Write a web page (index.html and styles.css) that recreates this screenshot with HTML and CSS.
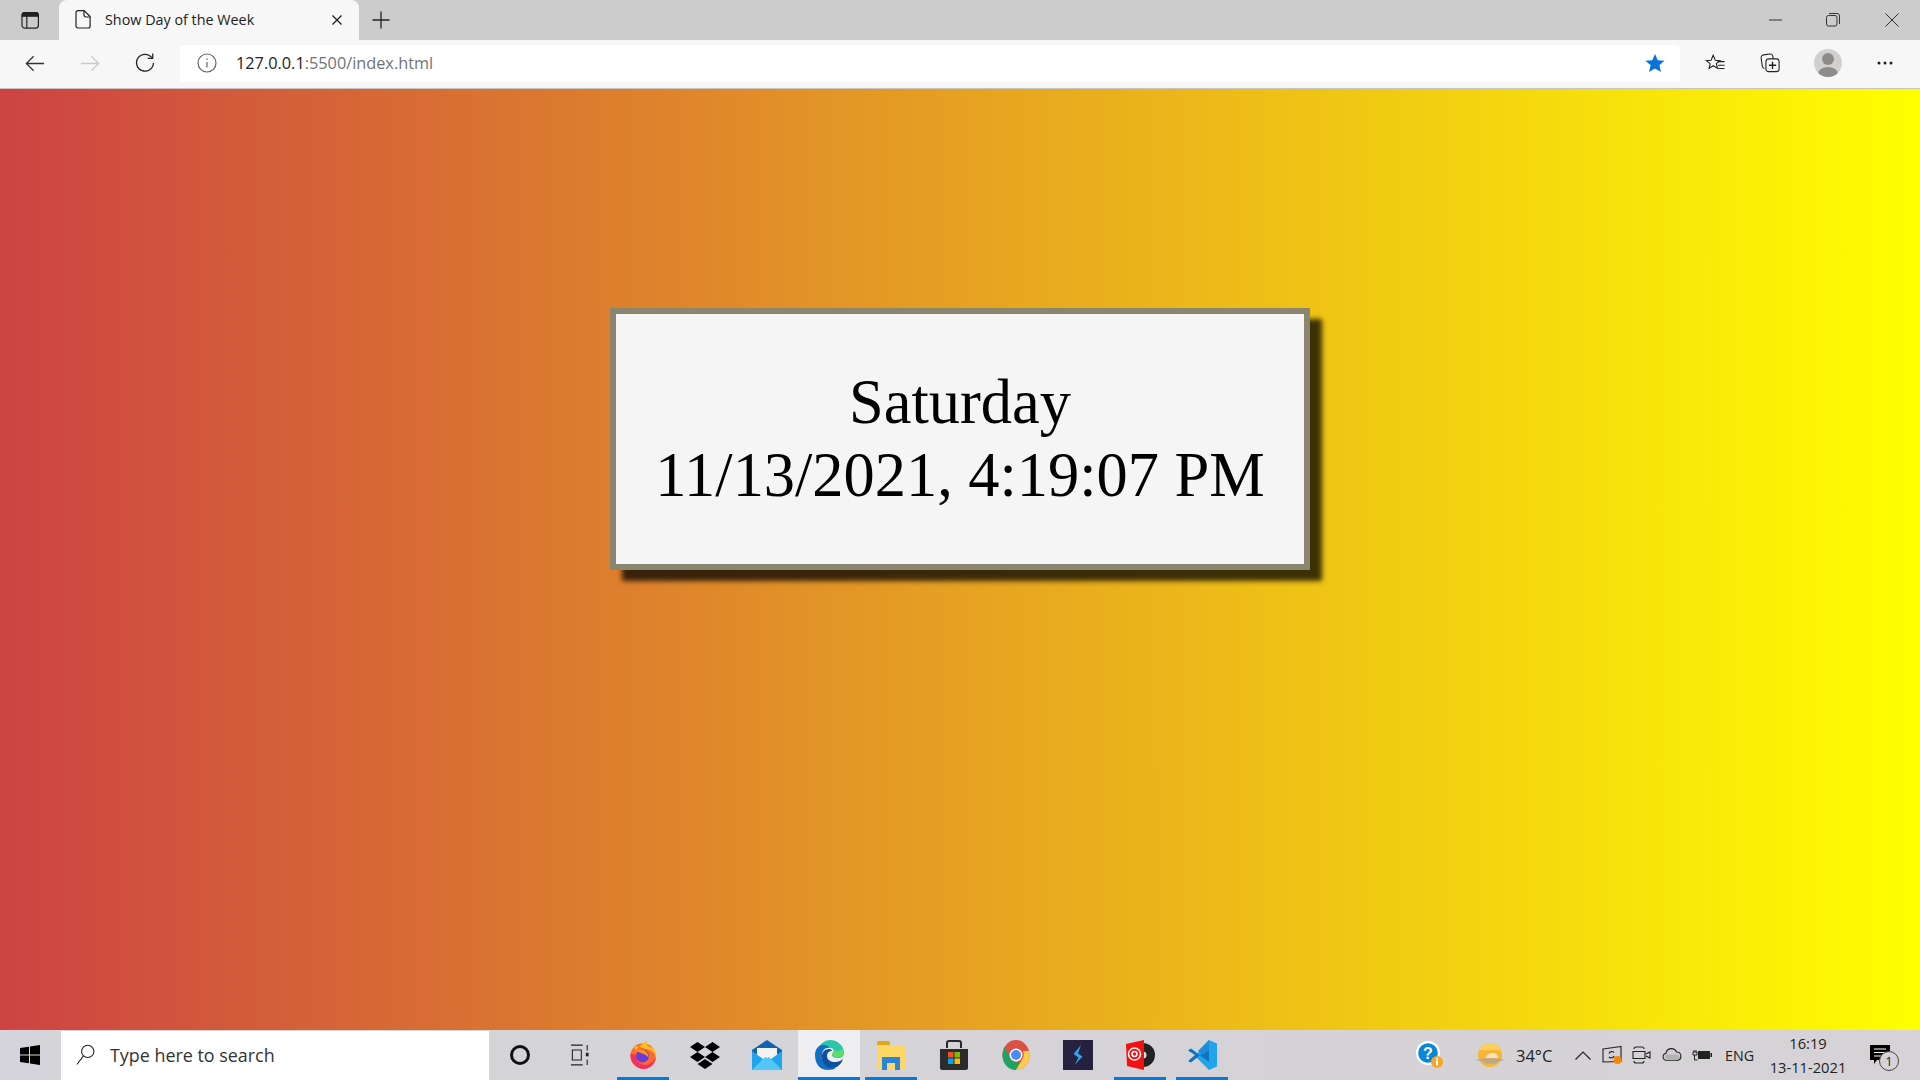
FILE: index.html
```html
<!DOCTYPE html>
<html lang="en">
<head>
<meta charset="utf-8">
<title>Show Day of the Week</title>
<link rel="stylesheet" href="styles.css">
</head>
<body>
<div class="screen">
  <header class="tabstrip">
    <div class="tab-actions">
      <svg class="ic18" viewBox="0 0 18 18" fill="none" stroke="#222" stroke-width="1.2"><rect x="1" y="1.6" width="16.4" height="15.6" rx="3"/><path d="M1.2 3.2a2 2 0 0 1 2-1.6h12a2 2 0 0 1 2 1.6v2H1.2z" fill="#222"/><path d="M5.8 5v12"/></svg>
    </div>
    <div class="tab">
      <svg class="tab-doc" viewBox="0 0 16 19" fill="none" stroke="#222" stroke-width="1.2"><path d="M3 .7h6.2l5.9 5.9V16a2 2 0 0 1-2 2H3a2 2 0 0 1-2-2V2.700a2 2 0 0 1 2-2z"/><path d="M9 1v4a2 2 0 0 0 2 2h4"/></svg>
      <span class="tab-title">Show Day of the Week</span>
      <svg class="tab-close" viewBox="0 0 12 12" fill="none" stroke="#222" stroke-width="1.4"><path d="M1.500 1.500l9 9M10.500 1.500l-9 9"/></svg>
    </div>
    <svg class="new-tab" viewBox="0 0 18 18" fill="none" stroke="#222" stroke-width="1.300"><path d="M9 .5v17M.5 9h17"/></svg>
    <div class="window-controls">
      <svg class="win-min" viewBox="0 0 14 2" fill="none" stroke="#333" stroke-width="1"><path d="M0 1h13"/></svg>
      <svg class="win-max" viewBox="0 0 14 14" fill="none" stroke="#333" stroke-width="1"><rect x=".5" y="2.500" width="10.500" height="10.500" rx="2"/><path d="M3 .5h8a2.500 2.500 0 0 1 2.500 2.500v8"/></svg>
      <svg class="win-close" viewBox="0 0 14 14" fill="none" stroke="#333" stroke-width="1"><path d="M.5.500l13 13M13.500.500l-13 13"/></svg>
    </div>
  </header>

  <nav class="toolbar">
    <svg class="nav-back" viewBox="0 0 22 18" fill="none" stroke="#333" stroke-width="1.400"><path d="M21 9H1.500M9.500 1l-8 8 8 8"/></svg>
    <svg class="nav-forward" viewBox="0 0 22 18" fill="none" stroke="#c9c9c9" stroke-width="1.400"><path d="M1 9h19.500M12.500 1l8 8-8 8"/></svg>
    <svg class="nav-reload" viewBox="0 0 22 22" fill="none" stroke="#222" stroke-width="1.400"><path d="M18.500 5.200A9.300 9.300 0 1 0 20.300 11"/><path d="M19.500 .5v5.500H14"/></svg>
    <div class="address">
      <svg class="addr-info" viewBox="0 0 20 20" fill="none" stroke="#666" stroke-width="1.200"><circle cx="10" cy="10" r="9"/><path d="M10 9v5.500M10 5.500v1.500"/></svg>
      <span class="url"><span class="url-host">127.0.0.1</span>:5500/index.html</span>
      <svg class="addr-star" viewBox="0 0 22 21"><path d="M11 .5l3 7 7.500.600-5.700 4.900 1.800 7.400L11 16.500l-6.600 3.900 1.800-7.400L.5 8.100 8 7.500z" fill="#0a73d9"/></svg>
    </div>
    <svg class="tool tool-first" viewBox="0 0 22 20" fill="none" stroke="#222" stroke-width="1.200"><path d="M9 1.500l2.300 5.500 5.200.4-4 3.300 1.200 5-4.700-2.700-4.500 2.900L5.700 10.700 1.500 7.400l5.200-.4z"/><path d="M14 8.500h7.500M14.500 12.500h7M14.500 16h7"/></svg>
    <svg class="tool" viewBox="0 0 22 21" fill="none" stroke="#222" stroke-width="1.200"><path d="M5 16.500A3 3 0 0 1 2.500 14L1.200 5A3 3 0 0 1 3.800 1.600l7-1a3 3 0 0 1 3.200 2l.5 3"/><rect x="6.500" y="6" width="14.500" height="14" rx="3"/><path d="M13.800 9v8M9.800 13h8" stroke-width="1.500"/></svg>
    <div class="avatar"><span class="avatar-head"></span><span class="avatar-body"></span></div>
    <svg class="tool-more" viewBox="0 0 16 4" fill="#222"><circle cx="2" cy="2" r="1.500"/><circle cx="8" cy="2" r="1.500"/><circle cx="14" cy="2" r="1.500"/></svg>
  </nav>

  <main class="page">
    <section class="card">
      <div>Saturday</div>
      <div>11/13/2021, 4:19:07 PM</div>
    </section>
  </main>

  <footer class="taskbar">
    <div class="start">
      <svg class="ic-win" viewBox="0 0 20 20" fill="#000"><path d="M0 3l9-1.300v7.800H0zM10 1.500L20 0v9.500H10zM0 10.500h9v7.800L0 17zM10 10.500h10V20L10 18.500z"/></svg>
    </div>
    <div class="search">
      <svg class="search-ic" viewBox="0 0 21 24" fill="none" stroke="#222" stroke-width="1.200"><circle cx="13" cy="8" r="6.800"/><path d="M8.300 13L1 22.500"/></svg>
      <span class="search-text">Type here to search</span>
    </div>
    <div class="slot slot-cortana"><span class="cortana"></span></div>
    <div class="slot slot-tv">
      <svg class="ic-tv" viewBox="0 0 20 24" fill="none" stroke="#222" stroke-width="1.200"><path d="M0 1h13M0 23h13M1.500 6.500h10v11h-10zM18 1v6M18 17v6"/><rect x="16.500" y="9.500" width="3" height="4" fill="#222" stroke="none"/></svg>
    </div>
    <div class="apps">
      <div class="app active-line">
        <svg class="ic28" viewBox="0 0 30 30"><circle cx="15" cy="16" r="13.500" fill="#ff6a2a"/><path d="M6 5c0 3 0 4 2 5C11 4 17 1 20 0c-2 3-1 5 2 6 5 2 8 7 7 12-1-6-5-8-9-9z" fill="#ffbd1f"/><path d="M1.500 14c0 9 6 16 14 16s13-6 13.500-13c-3 7-9 10-15 8-5-2-7-6-6-10z" fill="#f0325e"/><circle cx="14.500" cy="16" r="7" fill="#6b3bd4"/><path d="M8 11c5-4 13-1 13 7-3-4-8-5-13-7z" fill="#ff9122"/></svg>
      </div>
      <div class="app">
        <svg class="ic30" viewBox="0 0 30 30" fill="#000"><path d="M7.500 2L15 7 7.500 12 0 7zM22.500 2L30 7 22.500 12 15 7zM7.500 12L15 17 7.500 22 0 17zM22.500 12L30 17 22.500 22 15 17zM15 19l7.500 5L15 29l-7.500-5z"/></svg>
      </div>
      <div class="app">
        <svg class="ic30" viewBox="0 0 30 30"><path d="M0 10L15 0l15 10v4H0z" fill="#0f63b0"/><path d="M5 15V8h20v7l-10 7z" fill="#f2f2f2"/><path d="M0 11l15 11 15-11v19H0z" fill="#20a4ee"/><path d="M0 30l13-13 2 1 2-1 13 13z" fill="#52c7f7"/></svg>
      </div>
      <div class="app app-open">
        <svg class="ic30" viewBox="0 0 30 30"><path d="M3 10C6 3 12 0 16 0c8 0 14 6 14 13 0 3-2 5-6 5-3 0-6-1-6-3 0-3 3-3 1-6-2-2-8-2-11 0-2 1-3 2-5 1z" fill="#2cc6a8"/><path d="M29 9c1 3 1 6-2 8-3 1-7 0-9-2 0-2 2-3 2-5 3 2 6 1 9-1z" fill="#5fdc6c"/><path d="M1 15C1 8 6 4 11 5c4 1 5 3 5 3-5-1-8 3-8 7 0 7 6 13 14 13-2 1-4 2-8 2C6 30 1 24 1 15z" fill="#1170c4"/><path d="M8 16c0-4 3-7 7-7 2 0 3 1 3 2-3 0-5 2-5 5 0 4 4 6 8 6 3 0 6-1 8-3-2 6-7 10-13 9C11 27 8 22 8 16z" fill="#0f4f9e"/></svg>
      </div>
      <div class="app active-line">
        <svg class="ic28" viewBox="0 0 28 30"><path d="M0 3a2 2 0 0 1 2-2h9a2 2 0 0 1 2 2v2H0z" fill="#e3a41a"/><rect y="5" width="28" height="25" rx="1" fill="#fbd768"/><path d="M5 30V17h18v13h-5v-7h-8v7z" fill="#2b84d6"/></svg>
      </div>
      <div class="app">
        <svg class="ic30" viewBox="0 0 30 30"><path d="M8 8V3a2 2 0 0 1 2-2h10a2 2 0 0 1 2 2v5" fill="none" stroke="#2a2a2a" stroke-width="2"/><path d="M1 9h28v19a2 2 0 0 1-2 2H3a2 2 0 0 1-2-2z" fill="#2c2c2c"/><rect x="9" y="12" width="5.500" height="5.500" fill="#f25022"/><rect x="15.500" y="12" width="5.500" height="5.500" fill="#7fba00"/><rect x="9" y="18.500" width="5.500" height="5.500" fill="#00a4ef"/><rect x="15.500" y="18.500" width="5.500" height="5.500" fill="#ffb900"/></svg>
      </div>
      <div class="app">
        <svg class="ic28" viewBox="0 0 28 30"><ellipse cx="14" cy="15" rx="13.500" ry="15" fill="#dd5044"/><path d="M14 30C6 30 .5 23 .5 15c0-3 1-6 2-8l7 13c1 2 6 4 9 1z" fill="#1da462"/><path d="M14 30l7-12c1-2 1-4 0-7h6c1 1 .5 4 .5 4 0 8-6 15-13.500 15z" fill="#ffcd46"/><circle cx="14" cy="15" r="6.500" fill="#fff"/><circle cx="14" cy="15" r="5" fill="#4c8bf5"/></svg>
      </div>
      <div class="app">
        <svg class="ic30" viewBox="0 0 30 30"><rect width="30" height="30" fill="#25213f"/><path d="M18 5l-7.500 9 5 3.500-4 7.500 8-8.500-4.500-3z" fill="#38a3e8"/></svg>
      </div>
      <div class="app active-line">
        <svg class="ic30" viewBox="0 0 30 30"><circle cx="18" cy="15" r="12" fill="#222"/><circle cx="18" cy="15" r="3.500" fill="#ddd"/><path d="M1 4l18-4v30L2 26z" fill="#f41010"/><circle cx="9.500" cy="14" r="6" fill="none" stroke="#fff" stroke-width="1.500"/><circle cx="9.500" cy="14" r="2.500" fill="none" stroke="#fff" stroke-width="1.500"/></svg>
      </div>
      <div class="app active-line">
        <svg class="ic30" viewBox="0 0 30 30"><path d="M22 0l8 3.500v23L22 30 8 16z" fill="#22a3ea"/><path d="M22 8v14L4 8.500 1 10.500 8 15l-7 6 3 1.500z" fill="#0d74bd"/><path d="M22 0l-11 11 5 4 6-5z" fill="#1a8ed9"/></svg>
      </div>
    </div>
    <div class="tray">
      <div class="tray-item tray-help">
        <svg class="ic28" viewBox="0 0 28 28"><circle cx="12" cy="12" r="12" fill="#fff"/><circle cx="12" cy="12" r="9.800" fill="#0a86d8"/><text x="12" y="18" class="help-q">?</text><circle cx="21" cy="21" r="6" fill="#f6a623"/><rect x="20" y="19.500" width="2" height="5" fill="#fff"/><rect x="20" y="16.800" width="2" height="1.800" fill="#fff"/></svg>
      </div>
      <div class="tray-item tray-sun">
        <svg class="ic-sun" viewBox="0 0 30 24"><circle cx="15" cy="12" r="12" fill="#f7b638"/><path d="M15 0a12 12 0 0 1 11 7H4A12 12 0 0 1 15 0z" fill="#fbd05c"/><path d="M11 15c0-3 3-5 7-5 3 0 5 2 5 5z" fill="#f3e2bd"/><path d="M0 17l9-1.500h14l7 1.500-7 1.500-3 2H11l-3-2z" fill="#b7a78f"/></svg>
      </div>
      <span class="temp">34°C</span>
      <svg class="tray-chev" viewBox="0 0 16 9" fill="none" stroke="#222" stroke-width="1.200"><path d="M.5 8.500L8 1l7.500 7.500"/></svg>
      <svg class="tray-ic tray-ic-first" viewBox="0 0 20 18" fill="none" stroke="#222" stroke-width="1.100"><path d="M1 3l18-2.500v15L1 16z"/><path d="M7 7.500a3 3 0 0 1 5-1M12 10a3 3 0 0 1-5 1" /><circle cx="15.500" cy="14" r="4" fill="#f7860c" stroke="none"/></svg>
      <svg class="tray-ic" viewBox="0 0 20 18" fill="none" stroke="#222" stroke-width="1.100"><path d="M2 3a2 2 0 0 1 2-2h6a2 2 0 0 1 2 2M2 15a2 2 0 0 0 2 2h6a2 2 0 0 0 2-2M1 5.500h12v7H1zM14 8l4-2v6l-4-2"/></svg>
      <svg class="tray-ic" viewBox="0 0 20 14" fill="#d2d0d2" stroke="#222" stroke-width="1.100"><path d="M4.500 12.500a3.700 3.700 0 0 1-.5-7.300A5.500 5.500 0 0 1 14.500 4 4.300 4.300 0 0 1 15.500 12.500z"/><path d="M3 6.500h13l2 3-3 3H4z" fill="#a7a5a7" stroke="none" opacity=".7"/></svg>
      <svg class="tray-ic" viewBox="0 0 20 12" fill="#222"><path d="M2 1v2M4 1v2M1 3h4v3H1zM2.500 6v5h3" fill="none" stroke="#222"/><rect x="6" y="2" width="12" height="8"/><rect x="18.500" y="4" width="1.500" height="4"/></svg>
      <span class="lang">ENG</span>
      <div class="clock"><span>16:19</span><span>13-11-2021</span></div>
      <div class="notify">
        <svg class="notify-ic" viewBox="0 0 20 20"><path d="M0 0h20v15H7l-3 4v-4H0z" fill="#000"/><path d="M4 4h12M4 7.500h12M4 11h12" stroke="#fff" stroke-width="1"/></svg>
        <span class="notify-badge">1</span>
      </div>
    </div>
  </footer>
</div>
</body>
</html>
```
FILE: styles.css
```css
* { box-sizing: border-box; }
html, body { margin: 0; height: 100%; }
body { font-family: "Open Sans", "Liberation Sans", sans-serif; overflow: hidden; }
svg { display: block; flex: none; }

.screen { width: 1920px; height: 1080px; display: flex; flex-direction: column; }

/* tab strip */
.tabstrip { height: 40px; flex: none; background: #cccccc; display: flex; align-items: stretch; }
.tab-actions { width: 59px; display: flex; align-items: center; justify-content: center; }
.ic18 { width: 18px; height: 18px; }
.tab { width: 300px; background: #f7f7f7; border-radius: 8px 8px 0 0; display: flex; align-items: center; padding: 0 16px 2px 16px; }
.tab-doc { width: 16px; height: 19px; margin-right: 14px; }
.tab-title { flex: 1; font-size: 14.350px; color: #222; white-space: nowrap; }
.tab-close { width: 12px; height: 12px; margin-top: 2px; }
.new-tab { width: 18px; height: 18px; align-self: center; margin-left: 13px; }
.window-controls { margin-left: auto; display: flex; align-items: center; }
.win-min { width: 14px; height: 2px; margin-right: 43px; }
.win-max { width: 14px; height: 14px; margin-right: 45px; }
.win-close { width: 14px; height: 14px; margin-right: 21px; }

/* toolbar */
.toolbar { height: 49px; flex: none; background: #f7f7f7; border-bottom: 1px solid #c6c6c6; display: flex; align-items: center; padding: 0 0 2px 25px; }
.nav-back { width: 20px; height: 17px; }
.nav-forward { width: 20px; height: 17px; margin-left: 35px; }
.nav-reload { width: 20px; height: 20px; margin-left: 35px; }
.address { width: 1500px; height: 37px; margin-left: 25px; background: #fff; border-radius: 4px; display: flex; align-items: center; padding: 0 15px 0 17px; }
.addr-info { width: 20px; height: 20px; }
.url { margin-left: 19px; flex: 1; font-size: 16.300px; color: #6f7378; white-space: nowrap; }
.url-host { color: #222; }
.addr-star { width: 20px; height: 20px; }
.tool { width: 20px; height: 20px; }
.tool-first { margin-left: 25px; margin-right: 35px; }
.avatar { width: 28px; height: 28px; margin-left: 34px; border-radius: 50%; background: #d2d0ce; position: relative; overflow: hidden; }
.avatar-head { position: absolute; left: 8px; top: 4px; width: 12px; height: 12px; border-radius: 50%; background: #8e8c8a; }
.avatar-body { position: absolute; left: 4px; top: 18px; width: 20px; height: 14px; border-radius: 50%; background: #8e8c8a; }
.tool-more { width: 16px; height: 4px; margin-left: 35px; }

/* page */
.page { flex: 1; min-height: 0; background: linear-gradient(to right, #cd4343, #ffff00); display: flex; flex-direction: column; align-items: center; padding-top: 219px; }
.card { width: 700px; height: 262px; background: #f5f5f5; border: 6px solid #8a8670; box-shadow: 12px 11px 5px rgba(0, 0, 0, .75); font-family: "Liberation Serif", serif; font-size: 62.400px; line-height: 73px; color: #000; text-align: center; display: flex; flex-direction: column; justify-content: center; padding-bottom: 2px; }

/* taskbar */
.taskbar { height: 50px; flex: none; background: linear-gradient(to right, #d4d4da, #d6d2d5); display: flex; align-items: stretch; }
.start { width: 61px; display: flex; align-items: center; justify-content: center; padding-right: 2px; }
.ic-win { width: 20px; height: 20px; }
.search { width: 428px; margin-top: 1px; background: #fff; display: flex; align-items: center; padding: 0 0 2px 15px; }
.search-ic { width: 19px; height: 22px; }
.search-text { margin-left: 15px; font-size: 17.900px; color: #333; white-space: nowrap; }
.slot { display: flex; align-items: center; justify-content: center; }
.slot-cortana { width: 62px; }
.cortana { width: 20px; height: 20px; border: 3px solid #111; border-radius: 50%; }
.slot-tv { width: 61px; padding-right: 4px; }
.ic-tv { width: 18px; height: 22px; }
.apps { display: flex; }
.app { width: 62.100px; display: flex; align-items: center; justify-content: center; position: relative; }
.app-open { background: #eeeef1; }
.app-open::after, .active-line::after { content: ""; position: absolute; bottom: 0; height: 3px; background: #0a78d4; }
.app-open::after { left: 0; right: 0; }
.active-line::after { left: 5px; right: 5px; }
.ic28 { width: 28px; height: 30px; }
.ic30 { width: 30px; height: 30px; }

/* tray */
.tray { margin-left: auto; display: flex; align-items: center; width: 687px; color: #222; }
.tray-item { display: flex; align-items: center; justify-content: center; }
.tray-help { width: 28px; margin-left: 183px; }
.tray-help .ic28 { height: 28px; }
.help-q { font-family: "Liberation Sans", sans-serif; font-size: 16px; font-weight: 700; fill: #fff; text-anchor: middle; }
.tray-sun { margin-left: 31px; }
.ic-sun { width: 30px; height: 24px; }
.temp { margin-left: 11px; font-size: 16.500px; white-space: nowrap; width: 37px; }
.tray-chev { width: 16px; height: 9px; margin-left: 22px; }
.tray-ic { width: 20px; height: 18px; margin-left: 10px; }
.tray-ic-first { margin-left: 11px; }
.lang { margin-left: 13px; font-size: 14.300px; width: 28px; white-space: nowrap; }
.clock { width: 92px; margin-left: 9px; display: flex; flex-direction: column; align-items: center; font-size: 14.700px; line-height: 24px; }
.notify { margin-left: 16px; position: relative; width: 20px; height: 20px; }
.notify-ic { width: 20px; height: 20px; }
.notify-badge { position: absolute; left: 9px; top: 6px; width: 20px; height: 20px; border: 1px solid #444; border-radius: 50%; background: #d5d3d9; font-size: 13px; line-height: 18px; text-align: center; }
```
